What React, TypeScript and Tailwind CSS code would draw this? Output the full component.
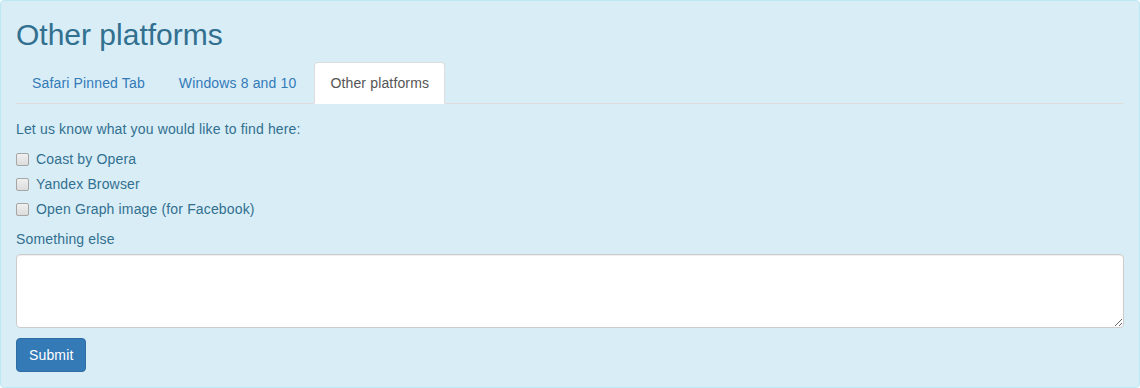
import React from "react";

const Check = ({ label }: { label: string }) => (
  <div className="flex items-center h-[20px] relative pl-[20px]">
    <span className="absolute left-0 top-[4px] w-[13px] h-[13px] rounded-[2px] border border-[#a6a6a6] bg-gradient-to-b from-[#f0f0f0] to-[#dcdcdc]" />
    <span>{label}</span>
  </div>
);

export default function App() {
  return (
    <div
      className="w-[1140px] h-[388px] bg-white text-[14px] leading-[20px] tracking-[0.15px]"
      style={{ fontFamily: '"Liberation Sans", Arial, Helvetica, sans-serif' }}
    >
      <div className="h-[388px] bg-[#d9edf7] border border-[#bce8f1] rounded-[4px] p-[15px] text-[#31708f]">
        <h2 className="text-[30px] leading-[33px] mt-[2px] mb-[11px] font-normal tracking-normal text-[#31708f]">Other platforms</h2>
        <ul className="flex border-b border-[#ddd]">
          <li className="-mb-px mr-[2px]">
            <a className="block px-[15px] py-[10px] border border-transparent rounded-t-[4px] text-[#337ab7]">Safari Pinned Tab</a>
          </li>
          <li className="-mb-px mr-[2px]">
            <a className="block px-[15px] py-[10px] border border-transparent rounded-t-[4px] text-[#337ab7]">Windows 8 and 10</a>
          </li>
          <li className="-mb-px mr-[2px]">
            <a className="block px-[15px] py-[10px] border border-[#ddd] border-b-transparent rounded-t-[4px] bg-white text-[#555]">Other platforms</a>
          </li>
        </ul>
        <div className="pt-[15px]">
          <p className="mb-[10px]">Let us know what you would like to find here:</p>
          <div className="flex flex-col gap-[5px]">
            <Check label="Coast by Opera" />
            <Check label="Yandex Browser" />
            <Check label="Open Graph image (for Facebook)" />
          </div>
          <div className="mt-[10px] mb-[5px]">Something else</div>
          <textarea
            rows={3}
            className="block w-full h-[74px] bg-white border border-[#ccc] rounded-[4px] px-[12px] py-[6px] shadow-[inset_0_1px_1px_rgba(0,0,0,0.075)] text-[#555] outline-none"
          />
          <button className="mt-[10px] h-[34px] px-[12px] bg-[#337ab7] border border-[#2e6da4] rounded-[4px] text-white text-[14px] leading-[20px]">
            Submit
          </button>
        </div>
      </div>
    </div>
  );
}
